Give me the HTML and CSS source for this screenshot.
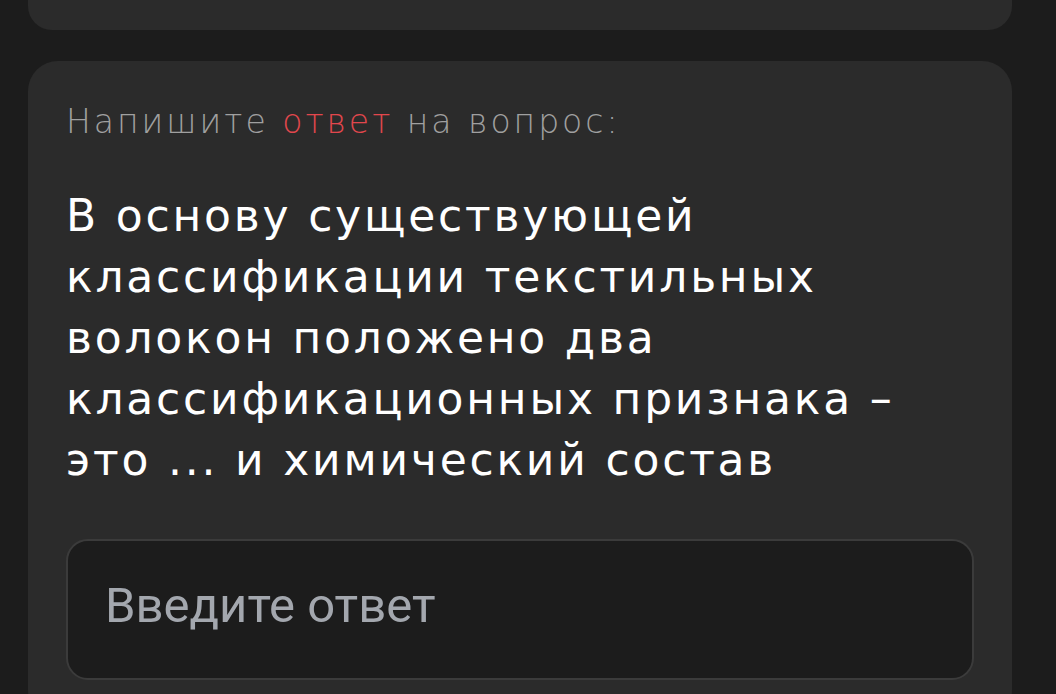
FILE: index.html
```html
<!DOCTYPE html>
<html lang="ru">
<head>
<meta charset="utf-8">
<title>Вопрос</title>
<link rel="stylesheet" href="styles.css">
</head>
<body>
<div class="page">
  <div class="card card-top"></div>
  <div class="card card-question">
    <div class="hint">Напишите <span class="accent">ответ</span> на вопрос:</div>
    <div class="question">В основу существующей<br>классификации текстильных<br>волокон положено два<br>классификационных признака –<br>это ... и химический состав</div>
    <textarea class="answer" placeholder="Введите ответ"></textarea>
  </div>
</div>
</body>
</html>
```
FILE: styles.css
```css
html, body {
  margin: 0;
  padding: 0;
  background: #1c1c1c;
  height: 100%;
  overflow: hidden;
}
.page {
  display: flex;
  flex-direction: column;
  gap: 31px;
  padding: 0 44px 0 28px;
}
.card {
  background: #2b2b2b;
}
.card-top {
  height: 30px;
  border-radius: 0 0 24px 24px;
}
.card-question {
  border-radius: 30px;
  padding: 40px 38px 40px 38px;
  display: flex;
  flex-direction: column;
}
.hint {
  font-family: "DejaVu Sans", sans-serif;
  font-weight: 200;
  font-size: 33px;
  line-height: 42px;
  letter-spacing: 3px;
  color: #a0a0a0;
}
.accent {
  color: #e2474d;
}
.question {
  margin-top: 42px;
  font-family: "DejaVu Sans", sans-serif;
  font-weight: 400;
  font-size: 44px;
  line-height: 61px;
  letter-spacing: 2.8px;
  color: #ffffff;
}
.answer {
  margin-top: 49px;
  height: 141px;
  box-sizing: border-box;
  background: #1c1c1c;
  border: 2px solid #3b3b3b;
  border-radius: 22px;
  padding: 36px 37px;
  font-family: Roboto, sans-serif;
  font-size: 49px;
  color: #ffffff;
  outline: none;
  resize: none;
}
.answer::placeholder {
  color: #a3a7ae;
}
```
